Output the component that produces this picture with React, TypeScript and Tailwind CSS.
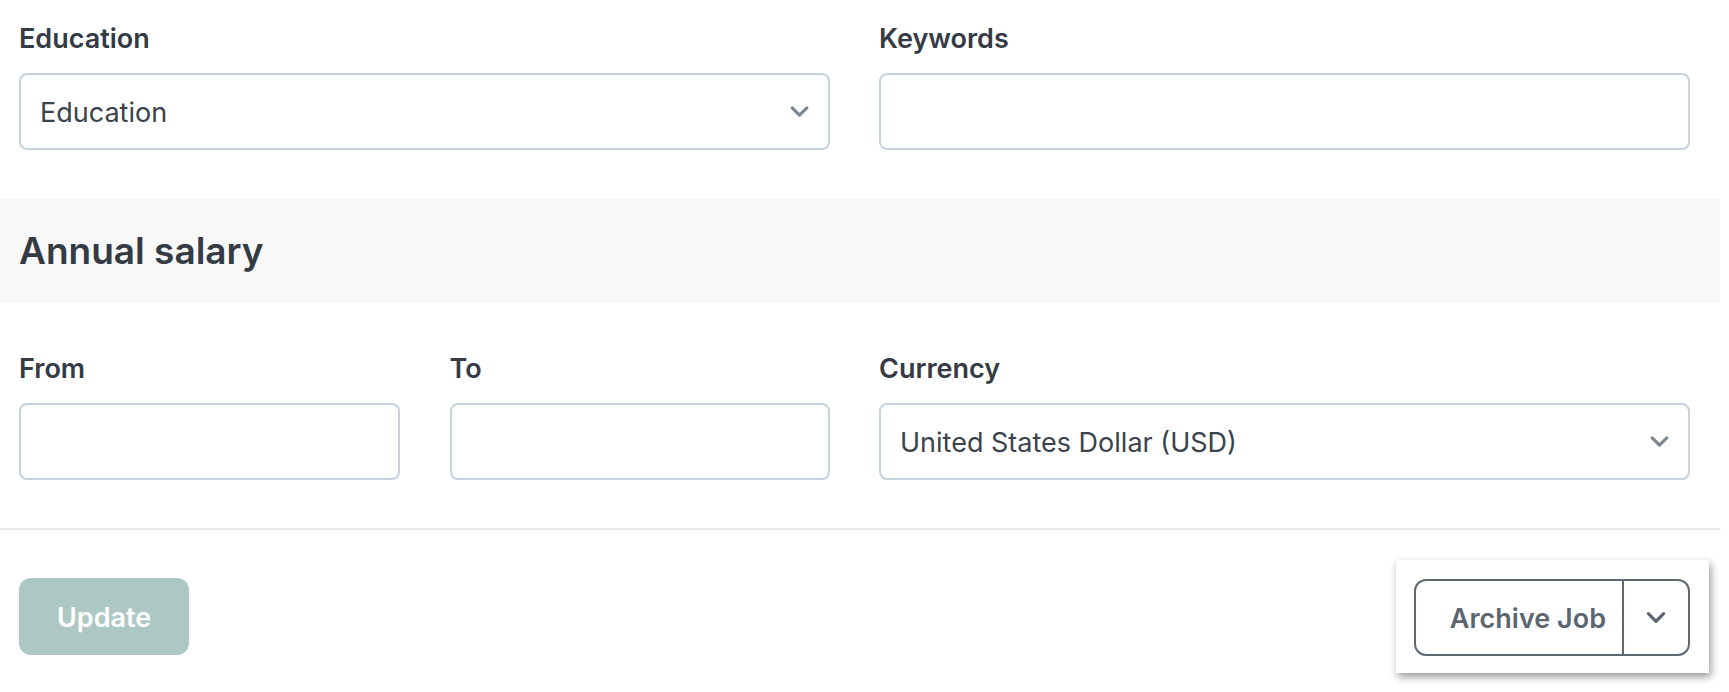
import React from 'react';

const FONT = { fontFamily: 'Inter, "Noto Sans", sans-serif' };

const Chevron: React.FC<{ className?: string }> = ({ className }) => (
  <svg viewBox="0 0 20 12" className={className} fill="none" stroke="currentColor" strokeWidth={3} strokeLinecap="round" strokeLinejoin="round">
    <path d="M3 2.5 L10 9.5 L17 2.5" />
  </svg>
);

const Label: React.FC<{ children: React.ReactNode }> = ({ children }) => (
  <label className="block text-[27px] leading-[32px] font-semibold text-[#343b45] mb-[18px]">{children}</label>
);

const TextBox: React.FC = () => (
  <div className="h-[77px] rounded-[8px] border-2 border-[#c8d2de] bg-white" />
);

const SelectBox: React.FC<{ value: string }> = ({ value }) => (
  <div className="h-[77px] rounded-[8px] border-2 border-[#c8d2de] bg-white flex items-center justify-between pl-[19px] pr-[18px]">
    <span className="pt-[4px] text-[27px] text-[#3a424c]">{value}</span>
    <Chevron className="w-[21px] h-[13px] text-[#7c8590]" />
  </div>
);

export default function App() {
  return (
    <div className="w-[1720px] bg-white" style={FONT}>
      <div className="grid grid-cols-2 gap-x-[49px] pl-[19px] pr-[30px] pt-[23px]">
        <div>
          <Label>Education</Label>
          <SelectBox value="Education" />
        </div>
        <div>
          <Label>Keywords</Label>
          <TextBox />
        </div>
      </div>

      <div className="mt-[49px] h-[104px] bg-[#f8f8f8] flex items-center pl-[19px]">
        <h2 className="text-[37px] font-semibold text-[#343b45]">Annual salary</h2>
      </div>

      <div className="grid grid-cols-2 gap-x-[49px] pl-[19px] pr-[30px] pt-[50px]">
        <div className="grid grid-cols-2 gap-x-[50px]">
          <div>
            <Label>From</Label>
            <TextBox />
          </div>
          <div>
            <Label>To</Label>
            <TextBox />
          </div>
        </div>
        <div>
          <Label>Currency</Label>
          <SelectBox value="United States Dollar (USD)" />
        </div>
      </div>

      <div className="mt-[48px] h-[2px] bg-[#e3e7eb]" />

      <div className="flex items-center justify-between pl-[19px] pr-[11px] pt-[30px] pb-[19px]">
        <button className="h-[77px] px-[38px] pt-[4px] rounded-[12px] bg-[#adc8c4] text-white text-[27px] font-semibold">
          Update
        </button>
        <div className="bg-white pl-[18px] pr-[19px] pt-[19px] pb-[17px] shadow-[2px_4px_8px_rgba(0,0,0,0.4)]">
          <div className="flex h-[77px] rounded-[12px] border-2 border-[#5e6873] text-[#5c6670]">
            <span className="flex items-center pl-[34px] pr-[16px] pt-[3px] text-[27px] font-semibold border-r-2 border-[#5e6873]">
              Archive Job
            </span>
            <span className="flex items-center justify-center w-[64px]">
              <Chevron className="w-[22px] h-[13px]" />
            </span>
          </div>
        </div>
      </div>
    </div>
  );
}
